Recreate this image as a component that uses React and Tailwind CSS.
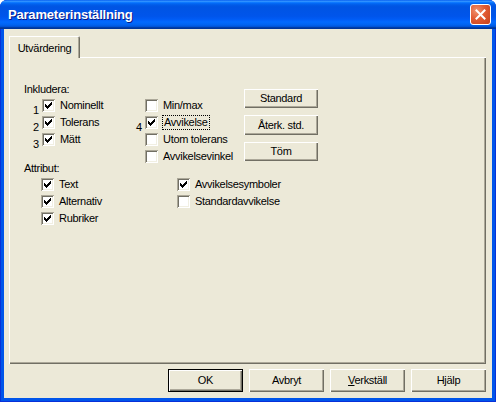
import React from 'react';

const BEVEL_OUT = 'shadow-[inset_1px_1px_0_#ffffff,inset_-1px_-1px_0_#716f64,inset_-2px_-2px_0_#aca899]';

function Check({ checked }) {
  return (
    <span className="flex w-[13px] h-[13px] shrink-0 bg-white shadow-[inset_1px_1px_0_#aca899,inset_-1px_-1px_0_#ffffff,inset_2px_2px_0_#716f64,inset_-2px_-2px_0_#f1efe2]">
      {checked && (
        <svg width="13" height="13" viewBox="0 0 13 13" shapeRendering="crispEdges">
          <path
            d="M3 5h1v3H3z M4 6h1v3H4z M5 7h1v3H5z M6 6h1v3H6z M7 5h1v3H7z M8 4h1v3H8z M9 3h1v3H9z"
            fill="#000"
          />
        </svg>
      )}
    </span>
  );
}

function Row({ num, checked, children, focus }) {
  return (
    <div className="flex items-center h-[17px]">
      {num !== undefined && (
        <span className="w-[9px] shrink-0 translate-y-[5px] leading-[11px]">{num}</span>
      )}
      <Check checked={checked} />
      {focus ? (
        <span className="ml-[4px] px-[1px] leading-[13px] border border-dotted border-black">{children}</span>
      ) : (
        <span className="ml-[5px] whitespace-nowrap">{children}</span>
      )}
    </div>
  );
}

function SideBtn({ children }) {
  return (
    <div className={`w-[74px] h-[22px] flex items-center justify-center bg-[#ece9d8] ${BEVEL_OUT}`}>
      {children}
    </div>
  );
}

function DlgBtn({ children, def }) {
  if (def) {
    return (
      <div className="w-[75px] h-[23px] border border-black">
        <div className={`w-full h-full flex items-center justify-center bg-[#ece9d8] ${BEVEL_OUT}`}>
          {children}
        </div>
      </div>
    );
  }
  return (
    <div className={`w-[75px] h-[23px] flex items-center justify-center bg-[#ece9d8] ${BEVEL_OUT}`}>
      {children}
    </div>
  );
}

export default function App() {
  return (
    <div className="w-[496px] h-[402px] bg-white font-['Liberation_Sans',Arial,sans-serif] text-[11px] tracking-[-0.3px] text-black">
      <div className="w-full h-full flex flex-col rounded-t-[7px] overflow-hidden bg-[#0055ea] shadow-[inset_0_0_0_1px_#0831d9]">
        {/* title bar */}
        <div className="h-[29px] shrink-0 flex items-center pl-[8px] pr-[5px] bg-[linear-gradient(to_bottom,#0058ee_0%,#3593ff_4%,#288eff_6%,#127dff_8%,#036ffc_10%,#0262ee_14%,#0057e5_20%,#0054e3_24%,#0055eb_56%,#005bf5_66%,#026afe_76%,#0062ef_86%,#0052d6_92%,#0040ab_94%,#003092_100%)]">
          <span className="text-white font-bold text-[13px] tracking-[-0.2px] [text-shadow:1px_1px_0_#0a1883]">
            Parameterinställning
          </span>
          <div className="ml-auto w-[21px] h-[21px] rounded-[3px] border border-white flex items-center justify-center bg-[radial-gradient(circle_at_30%_30%,#f0926f_0%,#e25b33_45%,#c5401a_100%)]">
            <svg width="11" height="11" viewBox="0 0 11 11">
              <path d="M1.5 1.5 L9.5 9.5 M9.5 1.5 L1.5 9.5" stroke="#fff" strokeWidth="2" strokeLinecap="square" />
            </svg>
          </div>
        </div>

        {/* client area */}
        <div className="h-[369px] mx-[4px] bg-[#ece9d8] flex flex-col pt-[7px]">
          {/* tab strip */}
          <div className="flex pl-[5px] relative z-10">
            <div className="w-[71px] h-[22px] -mb-[1px] bg-[#ece9d8] rounded-tr-[2px] shadow-[inset_1px_1px_0_#ffffff,inset_-1px_0_0_#716f64,inset_-2px_0_0_#aca899] flex items-start justify-center pt-[4px]">
              Utvärdering
            </div>
          </div>

          {/* panel */}
          <div className={`ml-[5px] mr-[6px] h-[307px] shrink-0 bg-[#ece9d8] ${BEVEL_OUT} pl-[15px] pt-[24px]`}>
            {/* Inkludera section */}
            <div className="flex h-[80px]">
              <div className="w-[112px] shrink-0">
                <div className="h-[16px] flex items-center">Inkludera:</div>
                <div className="pl-[9px]">
                  <Row num="1" checked>Nominellt</Row>
                  <Row num="2" checked>Tolerans</Row>
                  <Row num="3" checked>Mätt</Row>
                </div>
              </div>
              <div className="w-[108px] shrink-0 pt-[16px]">
                <Row num="">Min/max</Row>
                <Row num="4" checked focus>Avvikelse</Row>
                <Row num="">Utom tolerans</Row>
                <Row num="">Avvikelsevinkel</Row>
              </div>
              <div className="pt-[8px] flex flex-col gap-[7px]">
                <SideBtn>Standard</SideBtn>
                <SideBtn>Återk. std.</SideBtn>
                <SideBtn>Töm</SideBtn>
              </div>
            </div>

            {/* Attribut section */}
            <div className="flex">
              <div className="w-[153px] shrink-0">
                <div className="h-[15px] flex items-center">Attribut:</div>
                <div className="pl-[17px]">
                  <Row checked>Text</Row>
                  <Row checked>Alternativ</Row>
                  <Row checked>Rubriker</Row>
                </div>
              </div>
              <div className="pt-[15px]">
                <Row checked>Avvikelsesymboler</Row>
                <Row>Standardavvikelse</Row>
              </div>
            </div>
          </div>

          {/* dialog buttons */}
          <div className="flex justify-end gap-[6px] mr-[6px] mt-[5px]">
            <DlgBtn def>OK</DlgBtn>
            <DlgBtn>Avbryt</DlgBtn>
            <DlgBtn>
              <span><span className="underline">V</span>erkställ</span>
            </DlgBtn>
            <DlgBtn>Hjälp</DlgBtn>
          </div>
        </div>
      </div>
    </div>
  );
}
